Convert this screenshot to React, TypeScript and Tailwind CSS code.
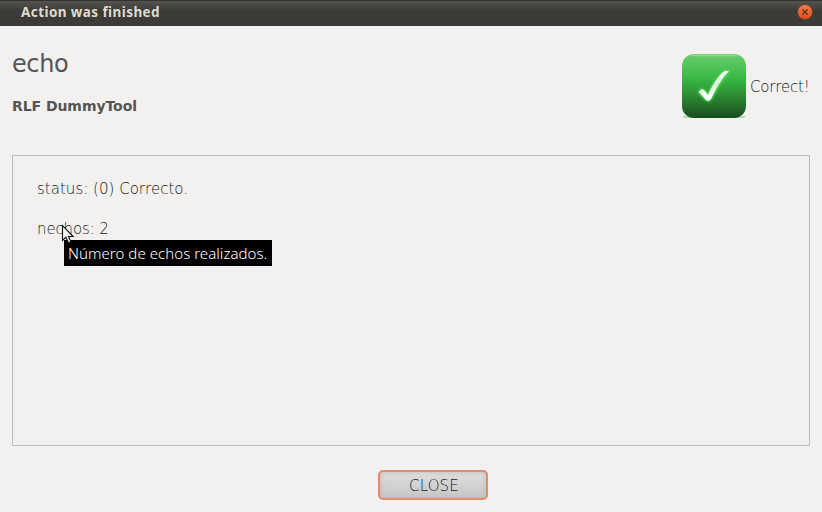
function TitleBar() {
  return (
    <header className="flex h-[26px] items-center justify-between border-t border-[#32312d] bg-linear-to-b from-[#53524c] to-[#3c3b37] to-40% pr-[9px] pl-[21px]">
      <h1 className="mt-[-2px] font-['Noto_Sans',sans-serif] text-[13.5px] leading-none font-bold tracking-[0.42px] whitespace-nowrap text-[#dfdbd2]">Action was finished</h1>
      <button aria-label="Close window" className="mt-[-4px] flex size-[16px] items-center justify-center rounded-full border border-[#6b4433] bg-linear-to-b from-[#f47c54] to-[#df4b0b]">
        <svg className="size-[6px]" viewBox="0 0 6 6"><path d="M.4.4 5.6 5.6M5.6.4.4 5.6" stroke="#49291c" strokeWidth="1.1" /></svg>
      </button>
    </header>
  );
}

const tick = "M17 38q2-4 5-2l4 5c4-9 9-17 14-22q3-3 7-2C39 25 34 35 29 45q-2 3-5 1Z";

function CheckIcon() {
  return (
    <svg className="size-[64px] shrink-0" viewBox="0 0 64 64">
      <defs>
        <linearGradient id="green" x2="0" y2="1">
          <stop offset="0" stopColor="#69cc70" />
          <stop offset=".38" stopColor="#39b942" />
          <stop offset=".65" stopColor="#2d8c34" />
          <stop offset="1" stopColor="#174c1d" />
        </linearGradient>
        <linearGradient id="white" x2="0" y2="1">
          <stop offset="0" stopColor="#fff" />
          <stop offset=".5" stopColor="#d9f2d9" />
          <stop offset=".8" stopColor="#fff" />
        </linearGradient>
        <filter id="glow" x="-50%" y="-50%" width="200%" height="200%"><feGaussianBlur stdDeviation="1.2" /></filter>
      </defs>
      <path d="M0 62h64q-1 2-5 2H5q-4 0-5-2Z" fill="#b0deb2" />
      <rect width="64" height="64" rx="12" fill="url(#green)" />
      <path d="M9 1.5h46" stroke="#8bdb90" strokeWidth="1.5" />
      <path d={tick} fill="#54dc59" stroke="#54dc59" strokeWidth="2" filter="url(#glow)" />
      <path d={tick} fill="url(#white)" />
    </svg>
  );
}

function Pointer() {
  return (
    <svg className="absolute top-[-16px] left-[-3px] h-[20px] w-[14px]" viewBox="0 0 14 20">
      <path d="M1.5 1.5v15l3.4-3.2 2.5 5.5 2.5-1.1-2.4-5.2h4.7Z" fill="#f4f4f4" stroke="#111" strokeWidth="1.1" />
    </svg>
  );
}

export default function App() {
  return (
    <div className="flex h-[512px] w-[822px] flex-col overflow-hidden bg-[#f2f1ef] font-['DejaVu_Sans',sans-serif] text-[#4c4c4c]">
      <TitleBar />
      <main className="flex flex-1 flex-col px-[12px]">
        <div className="flex h-[129px] justify-between">
          <div className="pt-[24px]">
            <h2 className="text-[24px] leading-[29px] tracking-[-0.4px] text-[#555]">echo</h2>
            <p className="mt-[18px] text-[14px] leading-[18px] font-bold tracking-[-0.06px] text-[#555]">RLF DummyTool</p>
          </div>
          <div className="mt-[28px] flex h-[64px] w-[128px] items-center gap-[4px]">
            <CheckIcon />
            <span className="pt-[2px] text-[15px] font-extralight tracking-[-0.18px] text-[#202020]">Correct!</span>
          </div>
        </div>
        <section className="h-[291px] border border-[#bdbcba] px-[24px] pt-[23px] text-[15px] leading-[20px] font-extralight text-[#202020]">
          <p className="tracking-[0.02px]">status: (0) Correcto.</p>
          <div className="relative mt-[20px] w-fit">
            <p className="tracking-[-0.12px]">nechos: 2</p>
            <div className="absolute top-[21px] left-[27px] flex h-[26px] w-[208px] items-center bg-black pl-[4px] font-['Noto_Sans',sans-serif] text-[15px] font-light tracking-[0.06px] whitespace-nowrap text-white">
              Número de echos realizados.
              <Pointer />
            </div>
          </div>
        </section>
        <button className="mt-[24px] ml-[366px] flex h-[30px] w-[110px] items-center justify-center rounded-[5px] border-2 border-[#e88a68] bg-linear-to-b from-[#dedede] to-[#c6c6c6] pt-[2px] pl-[2px] text-[15px] font-extralight tracking-[0.15px] text-[#202020] shadow-[inset_0_0_4px_#b8b8b8]">CLOSE</button>
      </main>
    </div>
  );
}
